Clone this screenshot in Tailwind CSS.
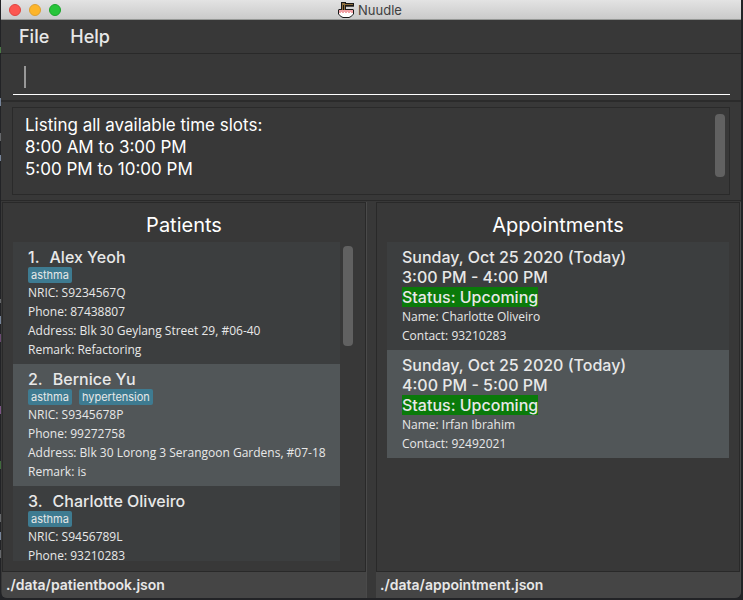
<!DOCTYPE html>
<html lang="en">
<head>
<meta charset="utf-8">
<title>Nuudle</title>
<script src="https://cdn.jsdelivr.net/npm/@tailwindcss/browser@4"></script>
</head>
<body class="relative flex h-screen flex-col overflow-hidden bg-[#222326] pr-0.5 pb-0.5 pl-px font-['Inter',sans-serif] text-[#e8e8e8]">
<div aria-hidden="true">
  <i class="absolute left-0 top-[47px] h-1.5 w-px bg-[#4a7a45]"></i>
  <i class="absolute left-0 top-[98px] h-2 w-px bg-[#76849a]"></i>
  <i class="absolute left-0 top-[133px] h-2 w-px bg-[#66686b]"></i>
  <i class="absolute left-0 top-[155px] h-1.5 w-px bg-[#76849a]"></i>
  <i class="absolute left-0 top-[299px] h-1 w-px bg-[#66686b]"></i>
  <i class="absolute left-0 top-[316px] h-2 w-px bg-[#76849a]"></i>
  <i class="absolute left-0 top-[334px] h-2 w-px bg-[#6a4a72]"></i>
  <i class="absolute left-0 top-[406px] h-2 w-px bg-[#7c5486]"></i>
  <i class="absolute left-0 top-[461px] h-2 w-px bg-[#3f6a3c]"></i>
  <i class="absolute left-0 top-[514px] h-2 w-px bg-[#66686b]"></i>
  <i class="absolute left-0 top-[532px] h-2 w-px bg-[#76849a]"></i>
  <i class="absolute left-0 top-[550px] h-2 w-px bg-[#66686b]"></i>
</div>
<div class="flex min-h-0 flex-1 flex-col overflow-hidden rounded-b-md bg-[#383838]">
  <header class="flex h-5 shrink-0 items-center border-b border-[#969896] bg-linear-to-b from-[#e3e3e3] to-[#cacaca] pr-2.5">
    <div class="flex flex-1 gap-2 pl-2">
      <button aria-label="Close" class="size-3 rounded-full border border-[#e0443e] bg-[#fc5650]"></button>
      <button aria-label="Minimize" class="size-3 rounded-full border border-[#dea031] bg-[#fdb52a]"></button>
      <button aria-label="Zoom" class="size-3 rounded-full border border-[#1ba52c] bg-[#27c53a]"></button>
    </div>
    <div class="flex items-center gap-1">
      <svg class="size-4" viewBox="0 0 16 16" aria-hidden="true">
        <path d="M3 0h5v1h8v3H8v3h7l1 1v4l-1 1-2 2-2 1H5l-2-1-2-2-1-1V8l1-1h2z" fill="#181818"/>
        <path d="M8 4h8v1H8z" fill="#57534e"/>
        <path d="M4 1h3v1h8v1H7v5H6V3H5v5H4z" fill="#8f6f3e"/>
        <path d="M8 5h8v2H8z" fill="#d6d6d6"/>
        <path d="M1 8h14v3H1z" fill="#f2a2a6"/>
        <path d="M1 11h14v1l-2 2-2 1H5l-2-1-2-2z" fill="#fff"/>
        <path d="M3 10h1v1H3zM6 10h1v1H6zM9 10h1v1H9zM12 10h1v1h-1z" fill="#fff"/>
      </svg>
      <h1 class="text-[13px] leading-4 text-[#404040]">Nuudle</h1>
    </div>
    <div class="flex-1"></div>
  </header>
  <nav class="flex h-[34px] shrink-0 items-center gap-[21px] border-b border-[#292929] px-[18px] text-[18px] font-medium">
    <button>File</button>
    <button>Help</button>
  </nav>
  <div class="relative shrink-0 border-b-2 border-[#2b2b2b] pt-1.5 pr-[11px] pb-[5px] pl-3">
    <input aria-label="Command" type="text" class="block h-[35px] w-full border-b border-white bg-transparent px-3 text-[17px] outline-none">
    <span class="absolute top-3 left-[23px] h-[22px] w-0.5 bg-[#989898]"></span>
  </div>
  <section aria-label="Result" class="shrink-0 border-b border-[#292929] px-[11px] py-[5px]">
    <div class="flex h-22 justify-between border border-[#2a2a2a] pt-1.5 pr-1 pl-3">
      <p class="text-[17px] leading-[22px] text-white">Listing all available time slots:<br>8:00 AM to 3:00 PM<br>5:00 PM to 10:00 PM</p>
      <div class="h-[63px] w-2.5 rounded-sm bg-[#616161]"></div>
    </div>
  </section>
  <main class="flex min-h-0 flex-1 pt-px pl-px">
    <section class="flex min-w-0 flex-1 flex-col border-r border-[#4a4a4a]">
      <div class="flex min-h-0 flex-1 flex-col border border-[#292929] px-2.5 pt-2 pb-2.5">
        <h2 class="h-[31px] text-center text-[20px] leading-[29px] text-white">Patients</h2>
        <div class="flex min-h-0 flex-1">
          <ul class="min-w-0 flex-1 overflow-hidden bg-[#3c3e3f]">
            <li class="bg-[#3c3e3f] px-[15px] py-[5px]">
              <h3 class="flex gap-2.5 text-[16px] leading-5 font-medium"><span>1.</span><span>Alex Yeoh</span></h3>
              <div class="flex gap-[7px] text-[11px] leading-4"><span class="rounded-xs bg-[#3e7b91] px-[3px]">asthma</span></div>
              <div class="font-['Open_Sans',sans-serif] text-[12px] leading-[19px] whitespace-nowrap"><p>NRIC: S9234567Q</p><p>Phone: 87438807</p><p>Address: Blk 30 Geylang Street 29, #06-40</p><p>Remark: Refactoring</p></div>
            </li>
            <li class="bg-[#515658] px-[15px] py-[5px]">
              <h3 class="flex gap-2.5 text-[16px] leading-5 font-medium"><span>2.</span><span>Bernice Yu</span></h3>
              <div class="flex gap-[7px] text-[11px] leading-4"><span class="rounded-xs bg-[#3e7b91] px-[3px]">asthma</span><span class="rounded-xs bg-[#3e7b91] px-[3px]">hypertension</span></div>
              <div class="font-['Open_Sans',sans-serif] text-[12px] leading-[19px] whitespace-nowrap"><p>NRIC: S9345678P</p><p>Phone: 99272758</p><p>Address: Blk 30 Lorong 3 Serangoon Gardens, #07-18</p><p>Remark: is</p></div>
            </li>
            <li class="bg-[#3c3e3f] px-[15px] pt-[5px]">
              <h3 class="flex gap-2.5 text-[16px] leading-5 font-medium"><span>3.</span><span>Charlotte Oliveiro</span></h3>
              <div class="flex gap-[7px] text-[11px] leading-4"><span class="rounded-xs bg-[#3e7b91] px-[3px]">asthma</span></div>
              <div class="font-['Open_Sans',sans-serif] text-[12px] leading-[19px] whitespace-nowrap"><p>NRIC: S9456789L</p><p>Phone: 93210283</p></div>
            </li>
          </ul>
          <div class="w-[15px] shrink-0 px-[3px] pt-1"><div class="h-[100px] w-2.5 rounded-sm bg-[#616161]"></div></div>
        </div>
      </div>
      <footer class="h-[26px] shrink-0 bg-[#454545] px-1 text-[14px] leading-[26px] font-semibold">./data/patientbook.json</footer>
    </section>
    <div class="w-[9px] shrink-0"></div>
    <section class="flex min-w-0 flex-1 flex-col border-r border-[#4a4a4a]">
      <div class="flex min-h-0 flex-1 flex-col border border-[#292929] px-2.5 pt-2 pb-2.5">
        <h2 class="h-[31px] text-center text-[20px] leading-[29px] text-white">Appointments</h2>
        <ul>
          <li class="bg-[#3c3e3f] px-[15px] py-[5px]">
            <h3 class="text-[16px] leading-5 font-medium">Sunday, Oct 25 2020 (Today)<br>3:00 PM - 4:00 PM</h3>
            <p class="w-fit bg-[#0a7a0a] text-[16px] leading-5 font-medium">Status: Upcoming</p>
            <div class="font-['Open_Sans',sans-serif] text-[12px] leading-[19px]"><p>Name: Charlotte Oliveiro</p><p>Contact: 93210283</p></div>
          </li>
          <li class="bg-[#515658] px-[15px] py-[5px]">
            <h3 class="text-[16px] leading-5 font-medium">Sunday, Oct 25 2020 (Today)<br>4:00 PM - 5:00 PM</h3>
            <p class="w-fit bg-[#0a7a0a] text-[16px] leading-5 font-medium">Status: Upcoming</p>
            <div class="font-['Open_Sans',sans-serif] text-[12px] leading-[19px]"><p>Name: Irfan Ibrahim</p><p>Contact: 92492021</p></div>
          </li>
        </ul>
      </div>
      <footer class="h-[26px] shrink-0 bg-[#454545] px-1 text-[14px] leading-[26px] font-semibold">./data/appointment.json</footer>
    </section>
  </main>
</div>
</body>
</html>
